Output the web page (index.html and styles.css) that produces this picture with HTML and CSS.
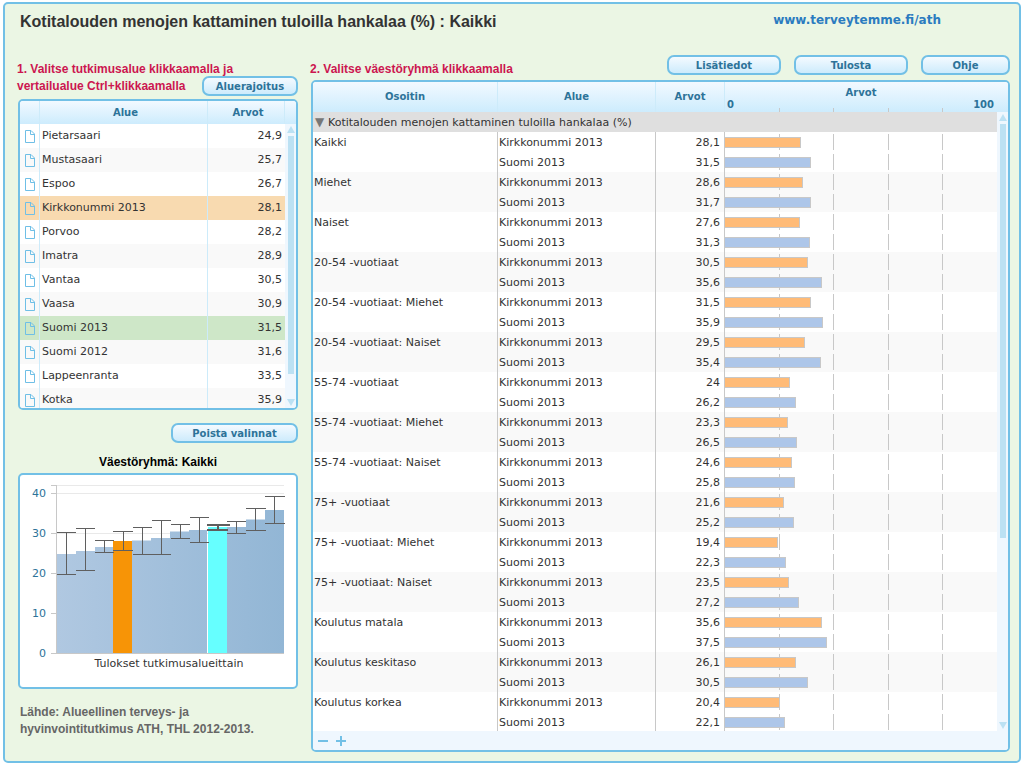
FILE: index.html
```html
<!DOCTYPE html>
<html lang="fi">
<head>
<meta charset="utf-8">
<title>Kotitalouden menojen kattaminen tuloilla hankalaa (%) : Kaikki</title>
<link rel="stylesheet" href="styles.css">
</head>
<body>
<svg width="0" height="0" class="symbols" aria-hidden="true">
  <symbol id="doc" viewBox="0 0 10 13"><path d="M.5.5H6L9.500 4V12.500H.5ZM5.500.5V4.500H9.500" fill="none" stroke="#6fbfe6"/></symbol>
</svg>
<div class="frame">
  <header class="top">
    <h1>Kotitalouden menojen kattaminen tuloilla hankalaa (%) : Kaikki</h1>
    <a class="site" href="#">www.terveytemme.fi/ath</a>
  </header>
  <main class="columns">
    <section class="left">
      <div class="left-head">
        <h2><span>1. Valitse tutkimusalue klikkaamalla ja </span><span>vertailualue Ctrl+klikkaamalla</span></h2>
        <button type="button" class="btn area-btn">Aluerajoitus</button>
      </div>
      <div class="panel areas">
        <table class="area-table">
          <colgroup><col class="c-icon"><col><col class="c-num"></colgroup>
          <thead><tr><th></th><th>Alue</th><th>Arvot</th></tr></thead>
          <tbody>
            <tr><td><svg class="doc"><use href="#doc"/></svg></td><td>Pietarsaari</td><td>24,9</td></tr>
            <tr><td><svg class="doc"><use href="#doc"/></svg></td><td>Mustasaari</td><td>25,7</td></tr>
            <tr><td><svg class="doc"><use href="#doc"/></svg></td><td>Espoo</td><td>26,7</td></tr>
            <tr class="selected"><td><svg class="doc"><use href="#doc"/></svg></td><td>Kirkkonummi 2013</td><td>28,1</td></tr>
            <tr><td><svg class="doc"><use href="#doc"/></svg></td><td>Porvoo</td><td>28,2</td></tr>
            <tr><td><svg class="doc"><use href="#doc"/></svg></td><td>Imatra</td><td>28,9</td></tr>
            <tr><td><svg class="doc"><use href="#doc"/></svg></td><td>Vantaa</td><td>30,5</td></tr>
            <tr><td><svg class="doc"><use href="#doc"/></svg></td><td>Vaasa</td><td>30,9</td></tr>
            <tr class="compared"><td><svg class="doc"><use href="#doc"/></svg></td><td>Suomi 2013</td><td>31,5</td></tr>
            <tr><td><svg class="doc"><use href="#doc"/></svg></td><td>Suomi 2012</td><td>31,6</td></tr>
            <tr><td><svg class="doc"><use href="#doc"/></svg></td><td>Lappeenranta</td><td>33,5</td></tr>
            <tr><td><svg class="doc"><use href="#doc"/></svg></td><td>Kotka</td><td>35,9</td></tr>
          </tbody>
        </table>
        <div class="rail"><div class="rail-head"></div><div class="track"><i class="up"></i><i class="thumb"></i><i class="down"></i></div></div>
      </div>
      <button type="button" class="btn clear-btn">Poista valinnat</button>
      <h3>Väestöryhmä: Kaikki</h3>
      <div class="panel chart">
        <svg viewBox="0 0 276 211" role="img" aria-label="Tulokset tutkimusalueittain">
          <defs><linearGradient id="blue" gradientUnits="userSpaceOnUse" x1="37" y1="0" x2="265" y2="0"><stop offset="0" stop-color="#b0c8e1"/><stop offset="1" stop-color="#92b6d5"/></linearGradient></defs>
          <path d="M37 9.500H264M37 17.500H264M37 57.500H264" stroke="#e9e9e9" fill="none"/>
          <path fill="url(#blue)" d="M37 177V78H56V75H75V71H94V177ZM112 177V64.500H131V62H150V55.500H169V54H187V177ZM207 177V51H226V43.500H245V34H264V177Z"/>
          <path fill="#f79406" d="M93 65H112V177H93Z"/>
          <path fill="#66ffff" d="M188 51H207V177H188Z"/>
          <path d="M36.500 9V178M31 9.500H36M31 17.500H36M31 57.500H36M31 97.500H36M31 137.500H36M31 177.500H264" stroke="#c8c8c8" fill="none"/>
          <g stroke="#5f5f5f" fill="none">
            <path d="M37 56.500H56M46.500 56V98M37 98.500H56M56 52.500H75M65.500 52V95M56 94.500H75M75 64.500H94M84.500 64V77M75 76.500H94M93 55.500H113M103.500 55V75M93 74.500H113M113 51.500H132M122.500 51V79M113 78.500H132M132 44.500H151M141.500 44V79M132 78.500H151M151 48.500H170M160.500 48V63M151 62.500H170M170 41.500H189M179.500 41V67M170 66.500H189M207 45.500H226M216.500 45V58M207 57.500H226M226 32.500H246M235.500 32V55M226 54.500H246M245 20.500H265M254.500 20V48M245 47.500H265"/>
            <path d="M187 49H210M198 49V54M187 54H208" stroke-width="2"/>
          </g>
          <g class="ticks"><text x="26" y="21">40</text><text x="26" y="61">30</text><text x="26" y="101">20</text><text x="26" y="141">10</text><text x="26" y="181">0</text></g>
          <text class="caption" x="149" y="191">Tulokset tutkimusalueittain</text>
        </svg>
      </div>
      <p class="source">Lähde: Alueellinen terveys- ja hyvinvointitutkimus ATH, THL 2012-2013.</p>
    </section>
    <section class="right">
      <div class="right-head">
        <h2>2. Valitse väestöryhmä klikkaamalla</h2>
        <nav class="tools">
          <button type="button" class="btn wide">Lisätiedot</button>
          <button type="button" class="btn wide">Tulosta</button>
          <button type="button" class="btn help">Ohje</button>
        </nav>
      </div>
      <div class="panel groups">
        <div class="group-body">
          <table class="group-table">
            <colgroup><col class="c-ind"><col class="c-area"><col class="c-val"><col></colgroup>
            <thead><tr><th>Osoitin</th><th>Alue</th><th>Arvot</th><th class="scale"><div class="scale-title">Arvot</div><div class="scale-ends"><span>0</span><span>100</span></div></th></tr></thead>
            <tbody class="group-row"><tr><td colspan="4"><span class="tri">▼</span>Kotitalouden menojen kattaminen tuloilla hankalaa (%)</td></tr></tbody>
            <tbody><tr><td rowspan="2">Kaikki</td><td>Kirkkonummi 2013</td><td>28,1</td><td><div class="bar a" style="width:28.1%"></div></td></tr><tr><td>Suomi 2013</td><td>31,5</td><td><div class="bar b" style="width:31.5%"></div></td></tr></tbody>
            <tbody><tr><td rowspan="2">Miehet</td><td>Kirkkonummi 2013</td><td>28,6</td><td><div class="bar a" style="width:28.6%"></div></td></tr><tr><td>Suomi 2013</td><td>31,7</td><td><div class="bar b" style="width:31.7%"></div></td></tr></tbody>
            <tbody><tr><td rowspan="2">Naiset</td><td>Kirkkonummi 2013</td><td>27,6</td><td><div class="bar a" style="width:27.6%"></div></td></tr><tr><td>Suomi 2013</td><td>31,3</td><td><div class="bar b" style="width:31.3%"></div></td></tr></tbody>
            <tbody><tr><td rowspan="2">20-54 -vuotiaat</td><td>Kirkkonummi 2013</td><td>30,5</td><td><div class="bar a" style="width:30.5%"></div></td></tr><tr><td>Suomi 2013</td><td>35,6</td><td><div class="bar b" style="width:35.6%"></div></td></tr></tbody>
            <tbody><tr><td rowspan="2">20-54 -vuotiaat: Miehet</td><td>Kirkkonummi 2013</td><td>31,5</td><td><div class="bar a" style="width:31.5%"></div></td></tr><tr><td>Suomi 2013</td><td>35,9</td><td><div class="bar b" style="width:35.9%"></div></td></tr></tbody>
            <tbody><tr><td rowspan="2">20-54 -vuotiaat: Naiset</td><td>Kirkkonummi 2013</td><td>29,5</td><td><div class="bar a" style="width:29.5%"></div></td></tr><tr><td>Suomi 2013</td><td>35,4</td><td><div class="bar b" style="width:35.4%"></div></td></tr></tbody>
            <tbody><tr><td rowspan="2">55-74 -vuotiaat</td><td>Kirkkonummi 2013</td><td>24</td><td><div class="bar a" style="width:24%"></div></td></tr><tr><td>Suomi 2013</td><td>26,2</td><td><div class="bar b" style="width:26.2%"></div></td></tr></tbody>
            <tbody><tr><td rowspan="2">55-74 -vuotiaat: Miehet</td><td>Kirkkonummi 2013</td><td>23,3</td><td><div class="bar a" style="width:23.3%"></div></td></tr><tr><td>Suomi 2013</td><td>26,5</td><td><div class="bar b" style="width:26.5%"></div></td></tr></tbody>
            <tbody><tr><td rowspan="2">55-74 -vuotiaat: Naiset</td><td>Kirkkonummi 2013</td><td>24,6</td><td><div class="bar a" style="width:24.6%"></div></td></tr><tr><td>Suomi 2013</td><td>25,8</td><td><div class="bar b" style="width:25.8%"></div></td></tr></tbody>
            <tbody><tr><td rowspan="2">75+ -vuotiaat</td><td>Kirkkonummi 2013</td><td>21,6</td><td><div class="bar a" style="width:21.6%"></div></td></tr><tr><td>Suomi 2013</td><td>25,2</td><td><div class="bar b" style="width:25.2%"></div></td></tr></tbody>
            <tbody><tr><td rowspan="2">75+ -vuotiaat: Miehet</td><td>Kirkkonummi 2013</td><td>19,4</td><td><div class="bar a" style="width:19.4%"></div></td></tr><tr><td>Suomi 2013</td><td>22,3</td><td><div class="bar b" style="width:22.3%"></div></td></tr></tbody>
            <tbody><tr><td rowspan="2">75+ -vuotiaat: Naiset</td><td>Kirkkonummi 2013</td><td>23,5</td><td><div class="bar a" style="width:23.5%"></div></td></tr><tr><td>Suomi 2013</td><td>27,2</td><td><div class="bar b" style="width:27.2%"></div></td></tr></tbody>
            <tbody><tr><td rowspan="2">Koulutus matala</td><td>Kirkkonummi 2013</td><td>35,6</td><td><div class="bar a" style="width:35.6%"></div></td></tr><tr><td>Suomi 2013</td><td>37,5</td><td><div class="bar b" style="width:37.5%"></div></td></tr></tbody>
            <tbody><tr><td rowspan="2">Koulutus keskitaso</td><td>Kirkkonummi 2013</td><td>26,1</td><td><div class="bar a" style="width:26.1%"></div></td></tr><tr><td>Suomi 2013</td><td>30,5</td><td><div class="bar b" style="width:30.5%"></div></td></tr></tbody>
            <tbody><tr><td rowspan="2">Koulutus korkea</td><td>Kirkkonummi 2013</td><td>20,4</td><td><div class="bar a" style="width:20.4%"></div></td></tr><tr><td>Suomi 2013</td><td>22,1</td><td><div class="bar b" style="width:22.1%"></div></td></tr></tbody>
          </table>
          <div class="rail"><div class="rail-head tall"></div><div class="track"><i class="up"></i><i class="thumb long"></i><i class="down"></i></div></div>
        </div>
        <div class="group-foot">
          <button type="button" class="zoom-btn" aria-label="Sulje kaikki"><svg width="10" height="10"><path d="M0 5H10" stroke="#72c0e6" stroke-width="2"/></svg></button>
          <button type="button" class="zoom-btn" aria-label="Avaa kaikki"><svg width="10" height="10"><path d="M0 5H10M5 0V10" stroke="#72c0e6" stroke-width="2"/></svg></button>
        </div>
      </div>
    </section>
  </main>
</div>
</body>
</html>
```
FILE: styles.css
```css
* { box-sizing: border-box; }

body {
  margin: 0;
  padding: 2px 3px 3px;
  background: #fff;
  color: #333;
  font: 11px/20px "DejaVu Sans", Verdana, sans-serif;
}

h1, h2, h3, p { margin: 0; font-family: "Liberation Sans", Arial, sans-serif; font-weight: bold; }
button { padding: 0; font: inherit; color: inherit; cursor: pointer; }
.symbols { position: absolute; }

.frame {
  border: 2px solid #72c0e6;
  border-radius: 5px;
  background: #ebf6e4;
  padding: 8px 9px 9px 13px;
}

.top { display: flex; justify-content: space-between; height: 43px; padding-left: 2px; }
h1 { font-size: 16px; line-height: 20px; }
.site {
  margin-right: 69px;
  font-size: 12px;
  font-weight: bold;
  line-height: 16px;
  color: #2b7cc0;
  text-decoration: none;
}

.columns { display: flex; gap: 13px; }
.left { flex: 0 0 280px; min-width: 0; display: flex; flex-direction: column; }
.right { flex: 1; min-width: 0; }
h2 { font-size: 12px; line-height: 17px; color: #cc1650; }

.left-head { display: flex; justify-content: space-between; align-items: flex-end; height: 44px; padding-bottom: 3px; }
.left-head h2 { flex: 0 0 184px; min-width: 0; margin-left: -1px; padding-bottom: 1px; white-space: nowrap; }
.left-head h2 span { display: block; width: fit-content; }
.area-btn { width: 96px; }
.right-head { display: flex; justify-content: space-between; height: 25px; }
.right-head h2 { padding-top: 6px; margin-left: -1px; }
.tools { display: flex; gap: 13px; }

.btn {
  flex: none;
  height: 20px;
  border: 2px solid #72c0e6;
  border-radius: 7px;
  background: linear-gradient(#f4faff, #cdebfc);
  color: #2d7399;
  font-size: 10px;
  font-weight: bold;
  line-height: 15px;
}
.wide { width: 114px; }
.help { width: 89px; }

.panel { border: 2px solid #72c0e6; border-radius: 5px; background: #fff; overflow: hidden; }

table { flex: 1; min-width: 0; width: 100%; border-collapse: separate; border-spacing: 0; table-layout: fixed; }
th, td { padding: 0; overflow: hidden; white-space: nowrap; text-align: left; }
th {
  text-align: center;
  color: #2d7399;
  font-size: 10px;
  background: linear-gradient(#f2f9ff, #cdecfd);
  border-right: 1px solid #cdebfa;
}

.areas { display: flex; height: 311px; }
.area-table { align-self: flex-start; }
.area-table th { height: 23px; padding-left: 4px; line-height: 20px; }
.area-table td { height: 24px; padding: 2px 3px 2px 2px; border-right: 1px solid #cdebfa; vertical-align: top; }
.area-table td:first-child { padding: 6px 0 0 5px; }
.area-table td:last-child { text-align: right; border-right: 0; }
.c-icon { width: 20px; }
.c-num { width: 77px; }
.area-table tbody tr:nth-child(even) { background: #f9f9f9; }
.area-table tbody tr.selected { background: #f8dab0; }
.area-table tbody tr.compared { background: #cee7c8; }
.doc { display: block; width: 10px; height: 13px; }

.rail { flex: 0 0 11px; display: flex; flex-direction: column; }
.rail-head { height: 23px; background: linear-gradient(#f2f9ff, #cdecfd); }
.rail-head.tall { height: 30px; }
.track { flex: 1; display: flex; flex-direction: column; align-items: center; background: #eff7fe; padding: 2px 0; }
.thumb { width: 6px; height: 238px; margin-top: 3px; background: #bce1f3; }
.thumb.long { height: 414px; }
.up, .down { border: 4px solid transparent; }
.up { border-top: 0; border-bottom: 7px solid #bce1f3; }
.down { margin-top: auto; border-bottom: 0; border-top: 7px solid #bce1f3; }

.clear-btn { align-self: flex-end; width: 127px; margin-top: 13px; }
h3 { margin: 10px 0 2px; font-size: 12px; line-height: 18px; color: #000; text-align: center; }
.chart { padding-top: 1px; }
.chart svg { display: block; width: 100%; }
.chart text { font-size: 11px; fill: #333; }
.chart .ticks text { text-anchor: end; fill: #2d7399; }
.chart .caption { text-anchor: middle; }
.source { margin-top: 15px; padding-left: 2px; font-size: 12px; line-height: 17px; color: #666; }

.group-body { display: flex; height: 649px; overflow: hidden; }
.group-table { align-self: flex-start; }
.c-ind { width: 185px; }
.c-area { width: 158px; }
.c-val { width: 69px; }
.group-table th { height: 30px; }
.group-table th:last-child { border-right: 0; }
.group-table td { height: 20px; line-height: 18px; padding: 2px 0 0 1px; border-right: 1px solid #c8c8c8; vertical-align: top; }
.group-table td:nth-last-child(2) { text-align: right; padding-right: 4px; }
.group-table tbody:nth-of-type(odd) { background: #f9f9f9; }
.group-table td:last-child, .scale {
  border-right: 0;
  padding: 0;
  background-repeat: no-repeat;
}
.group-table td:last-child {
  background-image: linear-gradient(#c8c8c8, #c8c8c8), linear-gradient(#c8c8c8, #c8c8c8), linear-gradient(#c8c8c8, #c8c8c8), linear-gradient(#c8c8c8, #c8c8c8);
  background-size: 1px 16px;
  background-position: 20% 50%, 40% 50%, 60% 50%, 80% 50%;
}
.group-table .scale {
  background-image: linear-gradient(#c8c8c8, #c8c8c8), linear-gradient(#c8c8c8, #c8c8c8), linear-gradient(#c8c8c8, #c8c8c8), linear-gradient(#c8c8c8, #c8c8c8), linear-gradient(#f2f9ff, #cdecfd);
  background-size: 1px 4px, 1px 4px, 1px 4px, 1px 4px, 100% 100%;
  background-position: 20% 100%, 40% 100%, 60% 100%, 80% 100%, 0 0;
}
.scale-title { padding-top: 4px; line-height: 14px; }
.scale-ends { display: flex; justify-content: space-between; padding: 0 3px 2px 2px; line-height: 10px; }
.group-table .group-row td { background: #dfdfdf; padding: 2px 0 0 2px; }
.tri { display: inline-block; width: 13px; color: #777; font-size: 12px; line-height: 12px; }
.bar { height: 11px; margin-top: 5px; border: 1px solid #c8c8c8; border-left: 0; }
.a { background: #ffbb77; }
.b { background: #adc6e9; }

.group-foot { display: flex; align-items: center; gap: 8px; height: 19px; padding-left: 5px; background: #eff7fe; }
.zoom-btn { border: 0; background: none; width: 10px; height: 10px; line-height: 0; }
.zoom-btn svg { display: block; }
```
